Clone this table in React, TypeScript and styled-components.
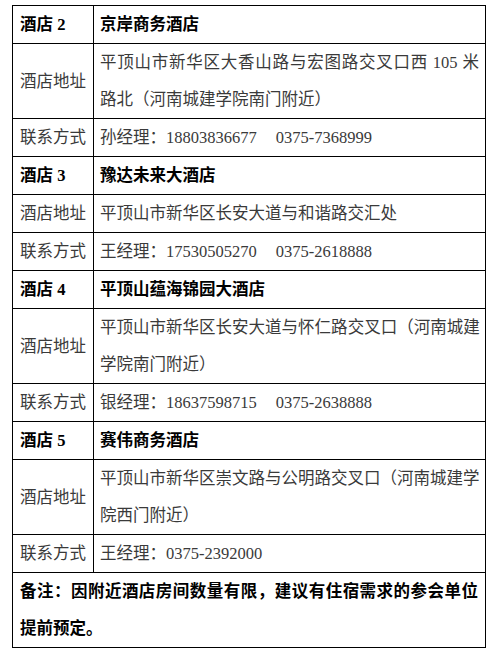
import * as React from 'react'
import styled, { createGlobalStyle } from 'styled-components'

const GlobalStyle = createGlobalStyle`
  html, body {
    margin: 0;
    padding: 0;
    background: #fff;
  }
  body {
    font-family: 'Liberation Serif', 'Noto Sans CJK SC', serif;
  }
`

const Page = styled.div`
  padding: 5px 0 0 12px;
`

const Table = styled.table`
  width: 474px;
  border-collapse: collapse;
  table-layout: fixed;
  font-size: 16.5px;
  color: #3a3a3a;
`

const Cell = styled.td<{ $bold?: boolean; $label?: boolean }>`
  border: 1px solid #000;
  padding: ${props => (props.$label ? '0 0 0 7px' : '0 6px')};
  line-height: 37px;
  vertical-align: middle;
  white-space: nowrap;
  overflow: hidden;
  font-weight: ${props => (props.$bold ? 700 : 400)};
  color: ${props => (props.$bold ? '#000' : '#3a3a3a')};
`

const NoteCell = styled.td`
  border: 1px solid #000;
  padding: 0 7px;
  line-height: 37px;
  font-weight: 700;
  color: #000;
  white-space: nowrap;
`

const Line = styled.div<{ $justify?: boolean; $tight?: boolean }>`
  text-align: ${props => (props.$justify ? 'justify' : 'left')};
  text-align-last: ${props => (props.$justify ? 'justify' : 'auto')};
  letter-spacing: ${props => (props.$tight ? '-0.7px' : 'normal')};
`

const Gap = styled.span`
  display: inline-block;
  width: 19px;
`

interface Hotel {
  no: number
  name: string
  address: string[]
  tight?: boolean
  manager: string
  mobile?: string
  phone: string
}

const hotels: Hotel[] = [
  {
    no: 2,
    name: '京岸商务酒店',
    address: ['平顶山市新华区大香山路与宏图路交叉口西 105 米', '路北（河南城建学院南门附近）'],
    manager: '孙经理：',
    mobile: '18803836677',
    phone: '0375-7368999',
  },
  {
    no: 3,
    name: '豫达未来大酒店',
    address: ['平顶山市新华区长安大道与和谐路交汇处'],
    manager: '王经理：',
    mobile: '17530505270',
    phone: '0375-2618888',
  },
  {
    no: 4,
    name: '平顶山蕴海锦园大酒店',
    address: ['平顶山市新华区长安大道与怀仁路交叉口（河南城建', '学院南门附近）'],
    tight: true,
    manager: '银经理：',
    mobile: '18637598715',
    phone: '0375-2638888',
  },
  {
    no: 5,
    name: '赛伟商务酒店',
    address: ['平顶山市新华区崇文路与公明路交叉口（河南城建学', '院西门附近）'],
    manager: '王经理：',
    phone: '0375-2392000',
  },
]

const HotelRows = ({ hotel }: { hotel: Hotel }) => (
  <>
    <tr>
      <Cell $bold $label>酒店 {hotel.no}</Cell>
      <Cell $bold>{hotel.name}</Cell>
    </tr>
    <tr>
      <Cell $label>酒店地址</Cell>
      <Cell>
        {hotel.address.map((line, i) => (
          <Line
            key={i}
            $justify={hotel.address.length > 1 && i === 0}
            $tight={hotel.tight && i === 0}
          >
            {line}
          </Line>
        ))}
      </Cell>
    </tr>
    <tr>
      <Cell $label>联系方式</Cell>
      <Cell>
        {hotel.manager}
        {hotel.mobile && (
          <>
            {hotel.mobile}
            <Gap />
          </>
        )}
        {hotel.phone}
      </Cell>
    </tr>
  </>
)

export default function App() {
  return (
    <Page>
      <GlobalStyle />
      <Table>
        <colgroup>
          <col style={{ width: 81 }} />
          <col />
        </colgroup>
        <tbody>
          {hotels.map(h => (
            <HotelRows key={h.no} hotel={h} />
          ))}
          <tr>
            <NoteCell colSpan={2}>
              <Line $justify>备注：因附近酒店房间数量有限，建议有住宿需求的参会单位</Line>
              <Line>提前预定。</Line>
            </NoteCell>
          </tr>
        </tbody>
      </Table>
    </Page>
  )
}
